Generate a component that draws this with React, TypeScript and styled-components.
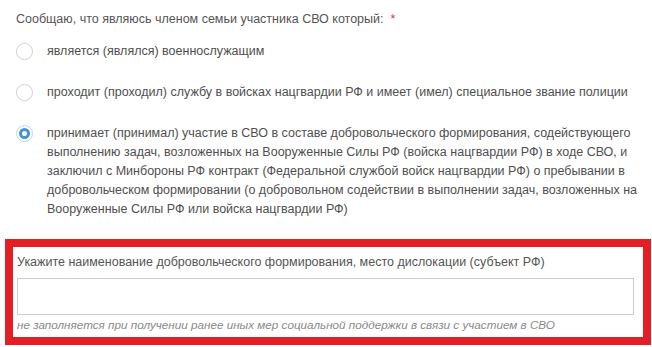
import React from 'react';
import styled, { createGlobalStyle } from 'styled-components';

const GlobalStyle = createGlobalStyle`
  body {
    margin: 0;
    background: #ffffff;
    font-family: "Liberation Sans", Arial, sans-serif;
  }
`;

const Page = styled.div`
  width: 646px;
  padding: 10px 1px 3px 5px;
`;

const Question = styled.div`
  padding-left: 11px;
`;

const Title = styled.div`
  font-size: 12.5px;
  line-height: 19px;
  color: #555555;
`;

const Required = styled.span`
  color: #e0343a;
  margin-left: 7px;
`;

const Options = styled.div`
  display: flex;
  flex-direction: column;
  gap: 22px;
  margin-top: 13px;
`;

const Option = styled.label`
  display: flex;
  align-items: flex-start;
  gap: 14px;
  cursor: pointer;
`;

const Radio = styled.span<{ $checked?: boolean }>`
  flex: none;
  position: relative;
  width: 17px;
  height: 17px;
  margin-top: 1px;
  box-sizing: border-box;
  border-radius: 50%;
  border: 1px solid ${(p) => (p.$checked ? '#b9d6ef' : '#cfcfcf')};
  background: #ffffff;

  &::after {
    content: '';
    display: ${(p) => (p.$checked ? 'block' : 'none')};
    position: absolute;
    left: 2px;
    top: 2px;
    width: 11px;
    height: 11px;
    box-sizing: border-box;
    border-radius: 50%;
    border: 3.5px solid #4b93cf;
    background: #ffffff;
  }
`;

const OptionText = styled.span`
  font-size: 12.5px;
  line-height: 19px;
  color: #4f4f4f;
`;

const Highlight = styled.div`
  margin-top: 20px;
  border: 8px solid #e41e25;
  padding: 6px 9px 4px 4px;
`;

const FieldLabel = styled.div`
  font-size: 12.5px;
  line-height: 19px;
  color: #555555;
`;

const Input = styled.input`
  display: block;
  width: 100%;
  height: 37px;
  margin-top: 6px;
  box-sizing: border-box;
  border: 1px solid #cccccc;
  background: #ffffff;
  padding: 0 8px;
  font: inherit;
  outline: none;
`;

const Hint = styled.div`
  margin-top: 2px;
  font-size: 11.7px;
  line-height: 16px;
  font-style: italic;
  color: #8a8a8a;
`;

const options = [
  'является (являлся) военнослужащим',
  'проходит (проходил) службу в войсках нацгвардии РФ и имеет (имел) специальное звание полиции',
  'принимает (принимал) участие в СВО в составе добровольческого формирования, содействующего выполнению задач, возложенных на Вооруженные Силы РФ (войска нацгвардии РФ) в ходе СВО, и заключил с Минбороны РФ контракт (Федеральной службой войск нацгвардии РФ) о пребывании в добровольческом формировании (о добровольном содействии в выполнении задач, возложенных на Вооруженные Силы РФ или войска нацгвардии РФ)',
];

function App() {
  const selected = 2;

  return (
    <Page>
      <GlobalStyle />
      <Question>
        <Title>
          Сообщаю, что являюсь членом семьи участника СВО который:<Required>*</Required>
        </Title>
        <Options>
          {options.map((text, i) => (
            <Option key={i}>
              <Radio $checked={i === selected} />
              <OptionText>{text}</OptionText>
            </Option>
          ))}
        </Options>
      </Question>
      <Highlight>
        <FieldLabel>
          Укажите наименование добровольческого формирования, место дислокации (субъект РФ)
        </FieldLabel>
        <Input type="text" />
        <Hint>
          не заполняется при получении ранее иных мер социальной поддержки в связи с участием в СВО
        </Hint>
      </Highlight>
    </Page>
  );
}

export default App;
